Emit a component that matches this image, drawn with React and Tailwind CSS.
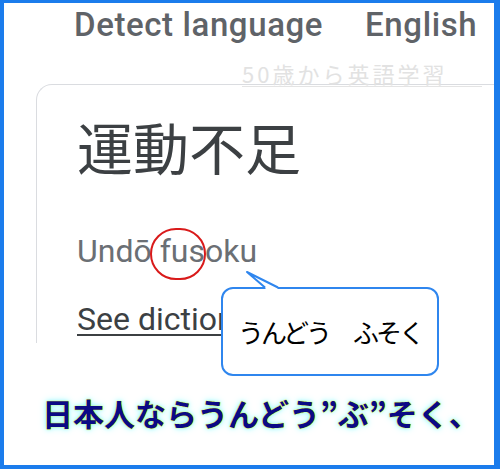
import React from "react";

const Callout = () => (
  <>
    {/* speech bubble */}
    <div className="absolute left-[217px] top-[284px] w-[218px] h-[89px] rounded-[12px] border-2 border-[#2f86ee] bg-white flex items-center justify-center gap-[24px] text-[26px] tracking-[-3px] text-black font-['Noto_Sans_CJK_JP',sans-serif] leading-none">
      <span>うんどう</span>
      <span>ふそく</span>
    </div>
    {/* tail */}
    <svg className="absolute left-[232px] top-[262px]" width="45" height="26" viewBox="0 0 45 26">
      <rect x="29.5" y="20" width="12" height="5" fill="#fff" />
      <path d="M29 22.5 L11 7 L42 22.5" fill="#fff" stroke="#2f86ee" strokeWidth="2" strokeLinejoin="round" />
    </svg>
  </>
);

export default function App() {
  return (
    <div className="relative w-[500px] h-[469px] bg-white border-[#1b7cec] border-t-[3px] border-l-4 border-r-[6px] border-b-4 flex flex-col overflow-hidden">
      {/* screenshot area */}
      <div className="relative h-[340px] overflow-hidden flex flex-col">
        <div className="flex gap-[42px] pl-[70px] pt-[4px] text-[33px] leading-[36px] tracking-[0.6px] font-medium text-[#5f6368] font-['Roboto',sans-serif]">
          <span>Detect language</span>
          <span>English</span>
        </div>

        <div className="ml-[32px] mt-[41px] flex-1 rounded-tl-[16px] border-l border-t border-[#dadce0] pl-[40px] flex flex-col">
          <p className="mt-[29px] text-[56px] leading-[64px] text-[#3c4043] font-['Noto_Sans_CJK_JP',sans-serif]">
            運動不足
          </p>
          <p className="mt-[55px] text-[32px] leading-[36px] text-[#6b6f74] font-['Roboto',sans-serif]">
            Undō fusoku
          </p>
          <p className="mt-[32px] text-[32px] leading-[36px] text-[#3c4043] underline decoration-2 underline-offset-[4px] font-['Roboto',sans-serif] whitespace-nowrap">
            See dictionary
          </p>
        </div>

        {/* watermark */}
        <div className="absolute left-[238px] top-[57px] w-[240px] border-b border-[#e4e4e4] text-[22px] leading-[26px] tracking-[3px] text-[#e2e2e2] font-['Noto_Sans_CJK_JP',sans-serif] whitespace-nowrap">
          50歳から英語学習
        </div>

        {/* red circle */}
        <div className="absolute left-[146px] top-[225px] w-[56px] h-[52px] rounded-full border-2 border-[#d91a1a]" />
      </div>

      <Callout />

      <div className="pl-[38px] pt-[50px] text-[31px] font-bold leading-[40px] text-[#0a0a85] font-['Noto_Sans_CJK_JP',sans-serif] whitespace-nowrap [text-shadow:0_0_1px_#ffff00,0_0_1px_#ffff00,0_0_4px_#7ff6ff,0_0_8px_#b8fbff]">
        日本人ならうんどう”ぶ”そく、
      </div>
    </div>
  );
}
